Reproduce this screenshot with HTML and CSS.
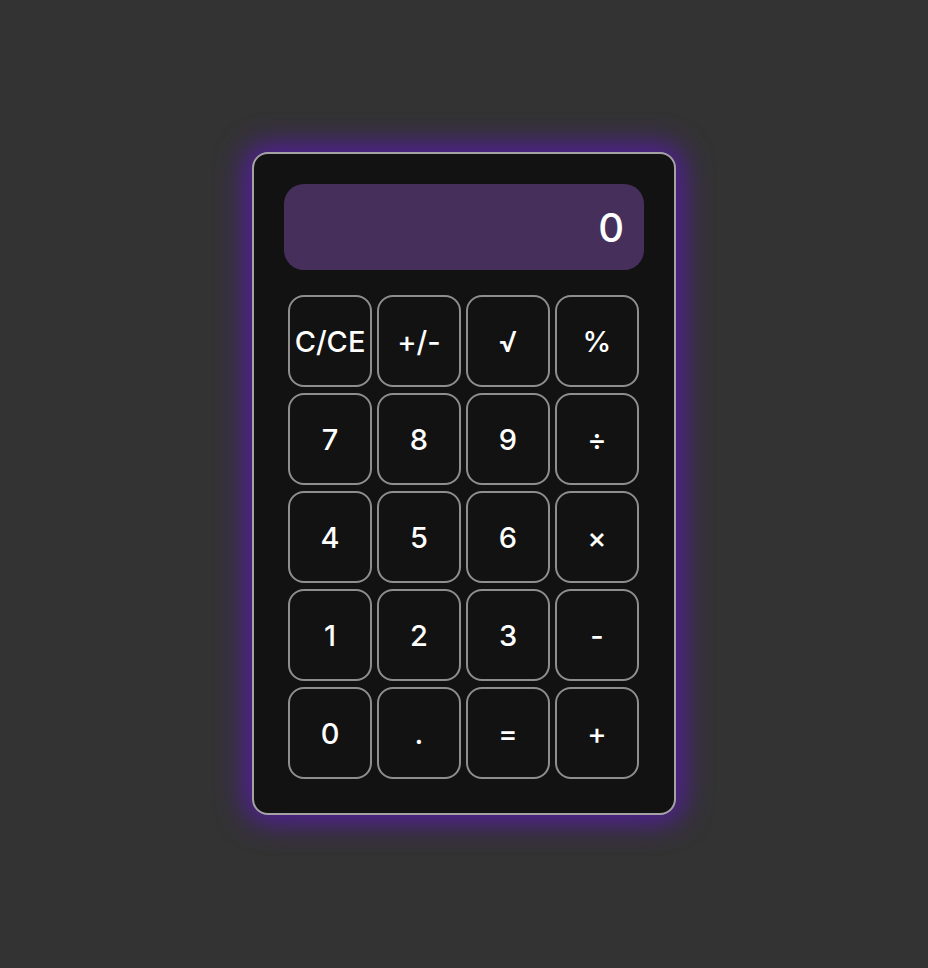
FILE: index.html
```html
<!DOCTYPE html>
<html>
<head>
<meta charset="utf-8">
<link rel="stylesheet" href="styles.css">
</head>
<body>
<div class="page">
  <div class="calc">
    <div class="display">0</div>
    <div class="keys">
      <button class="key">C/CE</button>
      <button class="key">+/-</button>
      <button class="key">√</button>
      <button class="key">%</button>
      <button class="key">7</button>
      <button class="key">8</button>
      <button class="key">9</button>
      <button class="key">÷</button>
      <button class="key">4</button>
      <button class="key">5</button>
      <button class="key">6</button>
      <button class="key">×</button>
      <button class="key">1</button>
      <button class="key">2</button>
      <button class="key">3</button>
      <button class="key">-</button>
      <button class="key">0</button>
      <button class="key">.</button>
      <button class="key">=</button>
      <button class="key">+</button>
    </div>
  </div>
</div>
</body>
</html>
```
FILE: styles.css
```css
html, body {
  margin: 0;
  padding: 0;
  background: #333333;
  font-family: "Inter", "Noto Sans", sans-serif;
}
.page {
  width: 928px;
  height: 968px;
  display: flex;
  justify-content: center;
  align-items: flex-start;
  padding-top: 152px;
  box-sizing: border-box;
}
.calc {
  width: 424px;
  box-sizing: border-box;
  background: #121212;
  border: 2px solid #a3a3a3;
  border-radius: 16px;
  padding: 30px 30px 34px 30px;
  box-shadow: 0 0 28px 8px rgba(84, 30, 160, 0.95);
}
.display {
  height: 86px;
  background: #46305b;
  border-radius: 20px;
  color: #ffffff;
  font-size: 40px;
  font-weight: 500;
  display: flex;
  align-items: center;
  justify-content: flex-end;
  padding-right: 20px;
  padding-top: 1px;
  box-sizing: border-box;
}
.keys {
  margin-top: 25px;
  margin-left: 4px;
  display: grid;
  grid-template-columns: repeat(4, 84px);
  grid-auto-rows: 92px;
  column-gap: 5px;
  row-gap: 6px;
  justify-content: start;
}
.key {
  margin: 0;
  padding: 0;
  background: #121212;
  border: 2px solid #8e8e8e;
  border-radius: 16px;
  color: #ffffff;
  font-family: "Inter", "Noto Sans", sans-serif;
  font-size: 29px;
  font-weight: 500;
  display: flex;
  align-items: center;
  justify-content: center;
  white-space: nowrap;
  overflow: visible;
}
```
